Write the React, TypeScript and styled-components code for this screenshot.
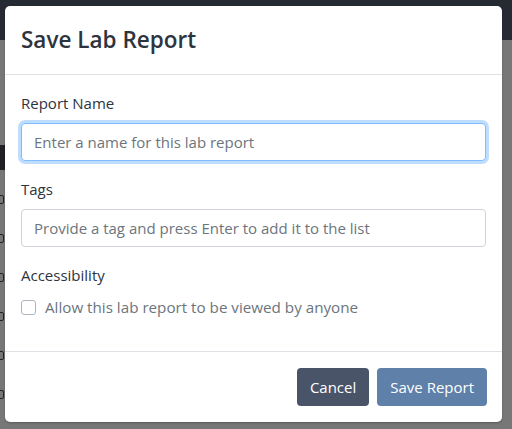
import React from 'react'
import styled, { createGlobalStyle } from 'styled-components'

const GlobalStyle = createGlobalStyle`
  html, body {
    margin: 0;
    padding: 0;
    background: #777777;
    font-family: "Open Sans", "Noto Sans", "Liberation Sans", sans-serif;
  }
  * { box-sizing: border-box; }
`

const App: React.FC = () => {
  return (
    <>
      <GlobalStyle />
      <Page>
        <Navbar />
        <SideStrip>
          <DarkBand />
          {Array.from({ length: 6 }).map((_, k) => (
            <StripIcon key={k} />
          ))}
        </SideStrip>
        <Backdrop>
          <Dialog>
            <Header>
              <Title>Save Lab Report</Title>
            </Header>
            <Body>
              <FormGroup>
                <Label>Report Name</Label>
                <Input focused placeholder="Enter a name for this lab report" autoFocus />
              </FormGroup>
              <FormGroup>
                <Label>Tags</Label>
                <Input placeholder="Provide a tag and press Enter to add it to the list" />
              </FormGroup>
              <FormGroup>
                <Label>Accessibility</Label>
                <CheckRow>
                  <Checkbox type="checkbox" />
                  <CheckLabel>Allow this lab report to be viewed by anyone</CheckLabel>
                </CheckRow>
              </FormGroup>
            </Body>
            <Footer>
              <Button variant="dark">Cancel</Button>
              <Button variant="primary">Save Report</Button>
            </Footer>
          </Dialog>
        </Backdrop>
      </Page>
    </>
  )
}

export default App

const Page = styled.div`
  position: relative;
  width: 512px;
  height: 429px;
  overflow: hidden;
  background: #777777;
`

const Navbar = styled.div`
  height: 40px;
  background: #262a33;
`

const SideStrip = styled.div`
  position: absolute;
  left: 0;
  top: 40px;
  width: 5px;
  bottom: 0;
  display: flex;
  flex-direction: column;
  align-items: flex-start;
  padding-top: 105px;
  gap: 30px;
`

const DarkBand = styled.div`
  width: 5px;
  height: 25px;
  background: #1f2124;
  margin-bottom: -5px;
`

const StripIcon = styled.div`
  width: 6px;
  height: 9px;
  margin-left: -2px;
  border: 1px solid #222;
  border-radius: 2px;
`

const Backdrop = styled.div`
  position: absolute;
  inset: 0;
  padding: 6px 0 0 5px;
`

const Dialog = styled.div`
  width: 497px;
  background: #fff;
  border-radius: 5px;
  box-shadow: 0 1px 2px rgba(0, 0, 0, 0.25);
  display: flex;
  flex-direction: column;
`

const Header = styled.div`
  padding: 16px 16px;
  border-bottom: 1px solid #dee2e6;
`

const Title = styled.h5`
  margin: 0;
  font-size: 22.5px;
  line-height: 36px;
  font-weight: 600;
  color: #2d3440;
`

const Body = styled.div`
  padding: 16px 16px 0;
  display: flex;
  flex-direction: column;
`

const FormGroup = styled.div`
  display: flex;
  flex-direction: column;
  margin-bottom: 16px;

  &:last-child {
    margin-bottom: 32px;
  }
`

const Label = styled.label`
  font-size: 15px;
  line-height: 24px;
  color: #2d3440;
  margin-bottom: 8px;
`

const Input = styled.input<{ focused?: boolean }>`
  width: 100%;
  height: 38px;
  padding: 6px 12px;
  font-family: inherit;
  font-size: 15px;
  line-height: 24px;
  color: #495057;
  background: #fff;
  border: 1px solid ${(p) => (p.focused ? '#80bdff' : '#ced4da')};
  border-radius: 4px;
  outline: none;
  box-shadow: ${(p) => (p.focused ? '0 0 0 3px rgba(0, 123, 255, 0.25)' : 'none')};

  &::placeholder {
    color: #6c757d;
  }
`

const CheckRow = styled.div`
  display: flex;
  align-items: center;
  height: 24px;
  gap: 9px;
`

const Checkbox = styled.input`
  appearance: none;
  margin: 0;
  width: 15px;
  height: 15px;
  border: 1px solid #adb5bd;
  border-radius: 3px;
  background: #fff;
`

const CheckLabel = styled.span`
  font-size: 15.2px;
  color: #6c757d;
`

const Footer = styled.div`
  display: flex;
  justify-content: flex-end;
  gap: 8px;
  padding: 16px 15px 16px 16px;
  border-top: 1px solid #dee2e6;
`

const Button = styled.button<{ variant: 'dark' | 'primary' }>`
  height: 38px;
  padding: 6px 13px;
  font-family: inherit;
  font-size: 15px;
  line-height: 24px;
  color: #fff;
  border: none;
  border-radius: 4px;
  background: ${(p) => (p.variant === 'dark' ? '#4a5469' : '#5e80a9')};
`
